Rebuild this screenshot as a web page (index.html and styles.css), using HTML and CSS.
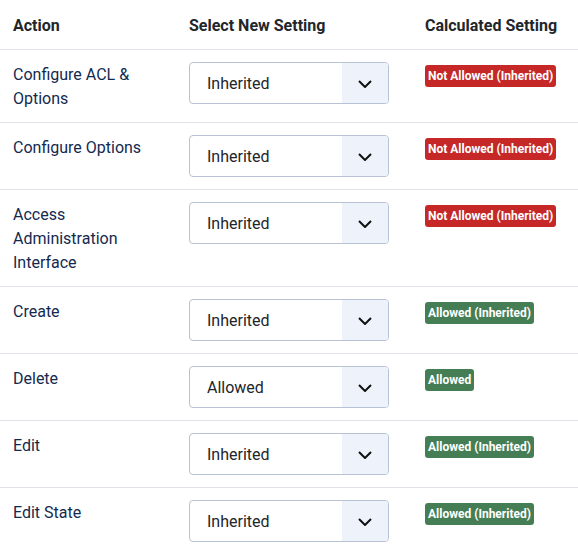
FILE: index.html
```html
<!DOCTYPE html>
<html lang="en">
<head>
<meta charset="utf-8">
<title>Permissions</title>
<link rel="stylesheet" href="styles.css">
</head>
<body>
<table class="perm-table">
  <colgroup>
    <col class="col-action">
    <col class="col-select">
    <col class="col-calc">
  </colgroup>
  <thead>
    <tr>
      <th class="first">Action</th>
      <th>Select New Setting</th>
      <th>Calculated Setting</th>
    </tr>
  </thead>
  <tbody>
    <tr>
      <td class="action">Configure ACL &amp; Options</td>
      <td class="setting"><div class="select-wrap"><select class="custom-select"><option>Inherited</option><option>Allowed</option><option>Denied</option></select><span class="select-arrow"><svg width="14" height="8" viewBox="0 0 14 8"><path d="M1 1l6 6 6-6" fill="none" stroke="#111" stroke-width="2"/></svg></span></div></td>
      <td class="calc"><span class="badge badge-danger">Not Allowed (Inherited)</span></td>
    </tr>
    <tr>
      <td class="action">Configure Options</td>
      <td class="setting"><div class="select-wrap"><select class="custom-select"><option>Inherited</option><option>Allowed</option><option>Denied</option></select><span class="select-arrow"><svg width="14" height="8" viewBox="0 0 14 8"><path d="M1 1l6 6 6-6" fill="none" stroke="#111" stroke-width="2"/></svg></span></div></td>
      <td class="calc"><span class="badge badge-danger">Not Allowed (Inherited)</span></td>
    </tr>
    <tr>
      <td class="action">Access Administration Interface</td>
      <td class="setting"><div class="select-wrap"><select class="custom-select"><option>Inherited</option><option>Allowed</option><option>Denied</option></select><span class="select-arrow"><svg width="14" height="8" viewBox="0 0 14 8"><path d="M1 1l6 6 6-6" fill="none" stroke="#111" stroke-width="2"/></svg></span></div></td>
      <td class="calc"><span class="badge badge-danger">Not Allowed (Inherited)</span></td>
    </tr>
    <tr>
      <td class="action">Create</td>
      <td class="setting"><div class="select-wrap"><select class="custom-select"><option>Inherited</option><option>Allowed</option><option>Denied</option></select><span class="select-arrow"><svg width="14" height="8" viewBox="0 0 14 8"><path d="M1 1l6 6 6-6" fill="none" stroke="#111" stroke-width="2"/></svg></span></div></td>
      <td class="calc"><span class="badge badge-success">Allowed (Inherited)</span></td>
    </tr>
    <tr>
      <td class="action">Delete</td>
      <td class="setting"><div class="select-wrap"><select class="custom-select"><option>Inherited</option><option selected>Allowed</option><option>Denied</option></select><span class="select-arrow"><svg width="14" height="8" viewBox="0 0 14 8"><path d="M1 1l6 6 6-6" fill="none" stroke="#111" stroke-width="2"/></svg></span></div></td>
      <td class="calc"><span class="badge badge-success">Allowed</span></td>
    </tr>
    <tr>
      <td class="action">Edit</td>
      <td class="setting"><div class="select-wrap"><select class="custom-select"><option>Inherited</option><option>Allowed</option><option>Denied</option></select><span class="select-arrow"><svg width="14" height="8" viewBox="0 0 14 8"><path d="M1 1l6 6 6-6" fill="none" stroke="#111" stroke-width="2"/></svg></span></div></td>
      <td class="calc"><span class="badge badge-success">Allowed (Inherited)</span></td>
    </tr>
    <tr>
      <td class="action">Edit State</td>
      <td class="setting"><div class="select-wrap"><select class="custom-select"><option>Inherited</option><option>Allowed</option><option>Denied</option></select><span class="select-arrow"><svg width="14" height="8" viewBox="0 0 14 8"><path d="M1 1l6 6 6-6" fill="none" stroke="#111" stroke-width="2"/></svg></span></div></td>
      <td class="calc"><span class="badge badge-success">Allowed (Inherited)</span></td>
    </tr>
  </tbody>
</table>
</body>
</html>
```
FILE: styles.css
```css
html, body {
  margin: 0;
  padding: 0;
  background: #fff;
}
body {
  padding-top: 1px;
  font-family: Roboto, "Liberation Sans", sans-serif;
  font-size: 16px;
  line-height: 24px;
  color: #22262a;
}
.perm-table {
  border-collapse: collapse;
  table-layout: fixed;
  width: 578px;
}
.col-action { width: 177px; }
.col-select { width: 236px; }
.col-calc { width: 165px; }
.perm-table th,
.perm-table td {
  padding: 13px 12px 11px;
  text-align: left;
  vertical-align: top;
  border-bottom: 1px solid #dfe3e7;
}
.perm-table th {
  font-weight: 700;
  color: #22262a;
}
.perm-table .first,
.perm-table .action {
  padding-left: 13px;
  padding-right: 11px;
}
.perm-table .setting,
.perm-table .calc {
  padding-top: 12px;
  padding-bottom: 12px;
}
.action {
  color: #132a4f;
}
.select-wrap {
  position: relative;
  width: 200px;
  height: 42px;
}
.custom-select {
  appearance: none;
  -webkit-appearance: none;
  box-sizing: border-box;
  width: 200px;
  height: 42px;
  margin: 0;
  padding: 0 50px 0 17px;
  border: 1px solid #b7c2d4;
  border-radius: 4px;
  background: #fff;
  font-family: Roboto, "Liberation Sans", sans-serif;
  font-size: 16px;
  color: #22262a;
}
.select-arrow {
  position: absolute;
  top: 1px;
  right: 1px;
  bottom: 1px;
  width: 46px;
  background: #eef3fb;
  border-radius: 0 3px 3px 0;
  display: flex;
  align-items: center;
  justify-content: center;
  pointer-events: none;
}
.select-arrow svg {
  display: block;
  margin-top: 2px;
}
.badge {
  display: inline-block;
  margin-top: 3px;
  padding: 0 3px;
  height: 22px;
  line-height: 22px;
  border-radius: 3px;
  font-size: 12px;
  font-weight: 700;
  color: #fff;
  white-space: nowrap;
  vertical-align: top;
}
.badge-danger { background: #c52827; }
.badge-success { background: #457d54; }
```
